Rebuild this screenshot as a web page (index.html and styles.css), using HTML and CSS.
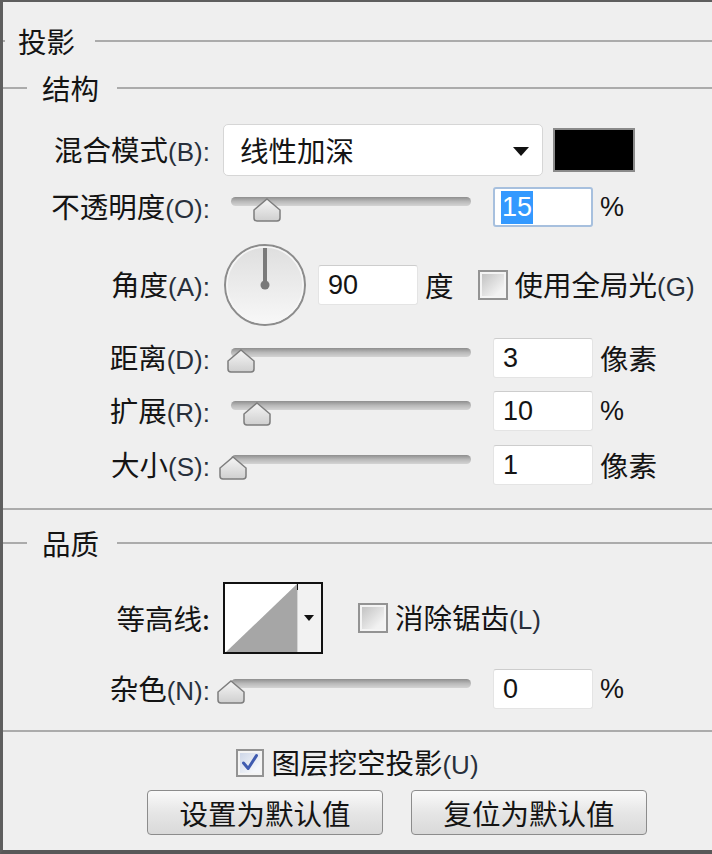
FILE: index.html
```html
<!DOCTYPE HTML>
<html>
<head>
<title>投影</title>
<meta charset="utf-8" />
<link rel="stylesheet" href="styles.css">
</head>
<body>
<div class="dialog">
  <div class="legend legend-main"><span>投影</span></div>
  <div class="legend legend-sub"><span>结构</span></div>

  <div class="row row-blend">
    <label class="lbl">混合模式<span class="key">(B):</span></label>
    <div class="field">
      <div class="select">线性加深<i class="caret"></i></div>
      <div class="swatch"></div>
    </div>
  </div>

  <div class="row row-opacity">
    <label class="lbl">不透明度<span class="key">(O):</span></label>
    <div class="field">
      <div class="slider"><div class="track"></div>
        <svg class="thumb" style="left:15%" width="28" height="24" viewBox="0 0 28 24"><defs><linearGradient id="tg1" x1="0" y1="0" x2="0" y2="1"><stop offset="0" stop-color="#f6f6f6"/><stop offset="1" stop-color="#cfcfcf"/></linearGradient></defs><path d="M14 1 L27 12 L27 20 Q27 23 24 23 L4 23 Q1 23 1 20 L1 12 Z" fill="url(#tg1)" stroke="#7d7d7d" stroke-width="1.5"/></svg>
      </div>
      <div class="num focus"><span class="sel">15</span></div>
      <span class="unit pct">%</span>
    </div>
  </div>

  <div class="row row-angle">
    <label class="lbl">角度<span class="key">(A):</span></label>
    <div class="field">
      <svg class="dial" width="84" height="84" viewBox="0 0 84 84">
        <defs><linearGradient id="dg" x1="0" y1="0" x2="0" y2="1"><stop offset="0" stop-color="#dedede"/><stop offset="1" stop-color="#f8f8f8"/></linearGradient></defs>
        <circle cx="42" cy="42" r="40" fill="url(#dg)" stroke="#8c8c8c" stroke-width="2"/>
        <circle cx="42" cy="42" r="38" fill="none" stroke="#f6f6f6" stroke-width="1.5"/>
        <line x1="42" y1="5" x2="42" y2="42" stroke="#7a7a7a" stroke-width="4"/>
        <circle cx="42" cy="42" r="4.5" fill="#7a7a7a"/>
      </svg>
      <div class="num">90</div>
      <span class="unit">度</span>
      <span class="check"></span>
      <span class="check-text">使用全局光<span class="key">(G)</span></span>
    </div>
  </div>

  <div class="row row-distance">
    <label class="lbl">距离<span class="key">(D):</span></label>
    <div class="field">
      <div class="slider"><div class="track"></div>
        <svg class="thumb" style="left:4%" width="28" height="24" viewBox="0 0 28 24"><defs><linearGradient id="tg2" x1="0" y1="0" x2="0" y2="1"><stop offset="0" stop-color="#f6f6f6"/><stop offset="1" stop-color="#cfcfcf"/></linearGradient></defs><path d="M14 1 L27 12 L27 20 Q27 23 24 23 L4 23 Q1 23 1 20 L1 12 Z" fill="url(#tg2)" stroke="#7d7d7d" stroke-width="1.5"/></svg>
      </div>
      <div class="num">3</div>
      <span class="unit">像素</span>
    </div>
  </div>

  <div class="row row-spread">
    <label class="lbl">扩展<span class="key">(R):</span></label>
    <div class="field">
      <div class="slider"><div class="track"></div>
        <svg class="thumb" style="left:11%" width="28" height="24" viewBox="0 0 28 24"><defs><linearGradient id="tg3" x1="0" y1="0" x2="0" y2="1"><stop offset="0" stop-color="#f6f6f6"/><stop offset="1" stop-color="#cfcfcf"/></linearGradient></defs><path d="M14 1 L27 12 L27 20 Q27 23 24 23 L4 23 Q1 23 1 20 L1 12 Z" fill="url(#tg3)" stroke="#7d7d7d" stroke-width="1.5"/></svg>
      </div>
      <div class="num">10</div>
      <span class="unit pct">%</span>
    </div>
  </div>

  <div class="row row-size">
    <label class="lbl">大小<span class="key">(S):</span></label>
    <div class="field">
      <div class="slider"><div class="track"></div>
        <svg class="thumb" style="left:1%" width="28" height="24" viewBox="0 0 28 24"><defs><linearGradient id="tg4" x1="0" y1="0" x2="0" y2="1"><stop offset="0" stop-color="#f6f6f6"/><stop offset="1" stop-color="#cfcfcf"/></linearGradient></defs><path d="M14 1 L27 12 L27 20 Q27 23 24 23 L4 23 Q1 23 1 20 L1 12 Z" fill="url(#tg4)" stroke="#7d7d7d" stroke-width="1.5"/></svg>
      </div>
      <div class="num">1</div>
      <span class="unit">像素</span>
    </div>
  </div>

  <div class="sep sep-1"></div>

  <div class="legend legend-sub legend-quality"><span>品质</span></div>

  <div class="row row-contour">
    <label class="lbl">等高线:</label>
    <div class="field">
      <svg class="contour" width="100" height="72" viewBox="0 0 100 72">
        <rect x="1" y="1" width="98" height="70" fill="#f2f2f2" stroke="#111" stroke-width="2"/>
        <rect x="2" y="2" width="72" height="68" fill="#fff"/>
        <polygon points="3,70 74,2 74,70" fill="#a6a6a6"/>
        <line x1="74.5" y1="2" x2="74.5" y2="70" stroke="#d4d4d4"/>
        <line x1="74.5" y1="2" x2="74.5" y2="8" stroke="#111"/>
        <polygon points="81,33 91,33 86,39" fill="#111"/>
      </svg>
      <span class="check check-aa"></span>
      <span class="check-text">消除锯齿<span class="key">(L)</span></span>
    </div>
  </div>

  <div class="row row-noise">
    <label class="lbl">杂色<span class="key">(N):</span></label>
    <div class="field">
      <div class="slider"><div class="track"></div>
        <svg class="thumb" style="left:0%" width="28" height="24" viewBox="0 0 28 24"><defs><linearGradient id="tg5" x1="0" y1="0" x2="0" y2="1"><stop offset="0" stop-color="#f6f6f6"/><stop offset="1" stop-color="#cfcfcf"/></linearGradient></defs><path d="M14 1 L27 12 L27 20 Q27 23 24 23 L4 23 Q1 23 1 20 L1 12 Z" fill="url(#tg5)" stroke="#7d7d7d" stroke-width="1.5"/></svg>
      </div>
      <div class="num">0</div>
      <span class="unit pct">%</span>
    </div>
  </div>

  <div class="sep sep-2"></div>

  <div class="knockout">
    <span class="check checked">
      <svg width="26" height="26" viewBox="0 0 26 26"><path d="M6 13 L11 19 L20 5" fill="none" stroke="#3f5bb0" stroke-width="3.2" stroke-linecap="round" stroke-linejoin="round"/></svg>
    </span>
    <span class="check-text">图层挖空投影<span class="key">(U)</span></span>
  </div>

  <div class="buttons">
    <button class="btn">设置为默认值</button>
    <button class="btn">复位为默认值</button>
  </div>
</div>
</body>
</html>
```

FILE: styles.css
```css
*{
  margin:0;
  padding:0;
  box-sizing:border-box;
}
body{
  background:#efefef;
  font-family:"Noto Sans CJK SC",sans-serif;
  color:#141414;
}
.dialog{
  width:712px;
  height:854px;
  background:#efefef;
  border-top:2px solid #5e5e5e;
  border-left:3px solid #5e5e5e;
  border-bottom:4px solid #585858;
  padding-top:19px;
  font-size:28.5px;
  line-height:1;
}
.key{
  font-family:"Liberation Sans",sans-serif;
  font-size:26px;
  color:#28303c;
}

/* 分组标题 */
.legend{
  display:flex;
  align-items:center;
  height:40px;
}
.legend::before,.legend::after{
  content:"";
  height:2px;
  background:#ababab;
}
.legend::after{flex:1;}
.legend-main::before{width:2px;margin-right:13px;}
.legend-main::after{margin-left:20px;}
.legend-sub{margin-top:7px;}
.legend-sub::before{width:24px;margin-right:15px;}
.legend-sub::after{margin-left:18px;}
.legend-quality{margin-top:13px;}

/* 行 */
.row{
  display:grid;
  grid-template-columns:207px 1fr;
  column-gap:13px;
  align-items:center;
  height:40px;
}
.lbl{
  text-align:right;
  white-space:nowrap;
}
.field{
  display:flex;
  align-items:center;
}
.row-blend{margin-top:16px;height:52px;}
.row-opacity{margin-top:11px;}
.row-angle{margin-top:16px;height:84px;}
.row-distance{margin-top:11px;}
.row-spread{margin-top:13px;}
.row-size{margin-top:14px;}
.row-contour{margin-top:19px;height:72px;}
.row-noise{margin-top:15px;}

.sep{height:2px;background:#ababab;}
.sep-1{margin-top:23px;}
.sep-2{margin-top:21px;}

/* 下拉框 */
.select{
  position:relative;
  width:320px;
  height:52px;
  background:#fff;
  border:1px solid #d6d6d6;
  border-radius:5px;
  padding-left:16px;
  display:flex;
  align-items:center;
}
.caret{
  position:absolute;
  right:13px;
  top:22px;
  border-top:9px solid #111;
  border-left:8px solid transparent;
  border-right:8px solid transparent;
}
.swatch{
  width:82px;
  height:44px;
  margin-left:10px;
  background:#000;
  border:2px solid #8a8a8a;
}

/* 滑块 */
.slider{
  position:relative;
  width:240px;
  height:24px;
  margin:4px 22px 0 8px;
}
.track{
  height:9px;
  border-radius:5px;
  background:linear-gradient(#8e8e8e,#b9b9b9 50%,#d4d4d4);
}
.thumb{
  position:absolute;
  top:1px;
  margin-left:-14px;
}

/* 数字框 */
.num{
  width:100px;
  height:40px;
  background:#fff;
  border:1px solid #e4e4e4;
  border-top-color:#cdcdcd;
  border-radius:3px;
  padding-left:9px;
  display:flex;
  align-items:center;
  font-family:"Liberation Sans",sans-serif;
  font-size:27px;
}
.num.focus{
  border:2px solid #a7c0de;
  padding-left:6px;
}
.sel{
  background:#3399ff;
  color:#fff;
  padding:3px 1px;
}
.unit{margin-left:7px;}
.unit.pct{
  font-family:"Liberation Sans",sans-serif;
  font-size:27px;
}

/* 角度 */
.dial{margin-right:11px;}
.row-angle .check{margin-left:24px;}

/* 复选框 */
.check{
  width:30px;
  height:30px;
  border:2px solid #939393;
  background:linear-gradient(135deg,#bdbdbd,#f2f2f2 75%);
  box-shadow:inset 0 0 0 2px #f4f4f4;
  display:inline-flex;
  align-items:center;
  justify-content:center;
}
.check-text{margin-left:7px;white-space:nowrap;}
.check-aa{margin-left:35px;}
.check.checked{
  width:28px;
  height:28px;
  background:linear-gradient(135deg,#c9d3e6,#f4f6fa 75%);
}

/* 挖空 */
.knockout{
  margin-top:17px;
  height:28px;
  display:flex;
  align-items:center;
  justify-content:center;
}

/* 按钮 */
.buttons{
  margin-top:13px;
  display:flex;
  gap:28px;
  padding-left:144px;
}
.btn{
  width:236px;
  height:45px;
  font-family:"Noto Sans CJK SC",sans-serif;
  font-size:28.5px;
  color:#141414;
  background:linear-gradient(#fafafa,#e6e6e6 50%,#d9d9d9);
  border:1px solid #8c8c8c;
  border-radius:4px;
}
```
